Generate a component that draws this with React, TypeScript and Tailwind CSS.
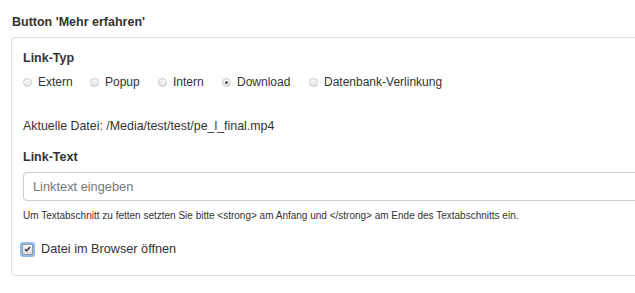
import React from "react";

function Radio({ checked, label }: { checked?: boolean; label: string }) {
  return (
    <div className="flex items-center">
      <span className="w-[9px] h-[9px] rounded-full border border-[#c8c8c8] bg-[linear-gradient(#fbfbfb,#e4e4e4)] flex items-center justify-center">
        {checked && <span className="w-[3px] h-[3px] rounded-full bg-[#555]" />}
      </span>
      <span className="ml-[6px] text-[12px] text-[#333]">{label}</span>
    </div>
  );
}

export default function App() {
  return (
    <div
      className="w-[635px] h-[293px] bg-white overflow-hidden text-[#333]"
      style={{ fontFamily: '"Liberation Sans", Arial, sans-serif' }}
    >
      <div className="pt-[14px] pl-[11px]">
        <div className="ml-[1px] text-[12.5px] font-bold leading-[16px] h-[23px]">Button 'Mehr erfahren'</div>
        <div className="w-[700px] h-[239px] border border-[#dedede] rounded-[4px] pl-[11px] pt-[12px]">
          <div className="text-[12.5px] font-bold leading-[16px]">Link-Typ</div>
          <div className="flex items-center mt-[8px] h-[16px]">
            <div className="w-[67px]"><Radio label="Extern" /></div>
            <div className="w-[68px]"><Radio label="Popup" /></div>
            <div className="w-[64px]"><Radio label="Intern" /></div>
            <div className="w-[87px]"><Radio checked label="Download" /></div>
            <Radio label="Datenbank-Verlinkung" />
          </div>
          <div className="mt-[28px] text-[12.4px] leading-[16px]">Aktuelle Datei: /Media/test/test/pe_l_final.mp4</div>
          <div className="mt-[15px] text-[12.5px] font-bold leading-[16px]">Link-Text</div>
          <div className="mt-[7px] h-[29px] border border-[#ccc] rounded-[4px] flex items-center pl-[9px] text-[12.8px] text-[#777]">
            Linktext eingeben
          </div>
          <div className="mt-[8px] text-[10px] leading-[13px]">
            Um Textabschnitt zu fetten setzten Sie bitte &lt;strong&gt; am Anfang und &lt;/strong&gt; am Ende des Textabschnitts ein.
          </div>
          <div className="mt-[19px] flex items-center -ml-[3px]">
            <span className="w-[15px] h-[15px] rounded-[3px] bg-[#8fbcf0] p-[2px] flex">
              <span className="flex-1 rounded-[1px] border border-[#9a9a9a] bg-[linear-gradient(#f4f4f4,#dcdcdc)] flex items-center justify-center">
                <svg width="7" height="6" viewBox="0 0 7 6">
                  <path d="M1 3.2 L2.7 4.8 L6 1" fill="none" stroke="#333" strokeWidth="1.3" />
                </svg>
              </span>
            </span>
            <span className="ml-[6px] text-[12.7px] leading-[16px]">Datei im Browser öffnen</span>
          </div>
        </div>
      </div>
    </div>
  );
}
